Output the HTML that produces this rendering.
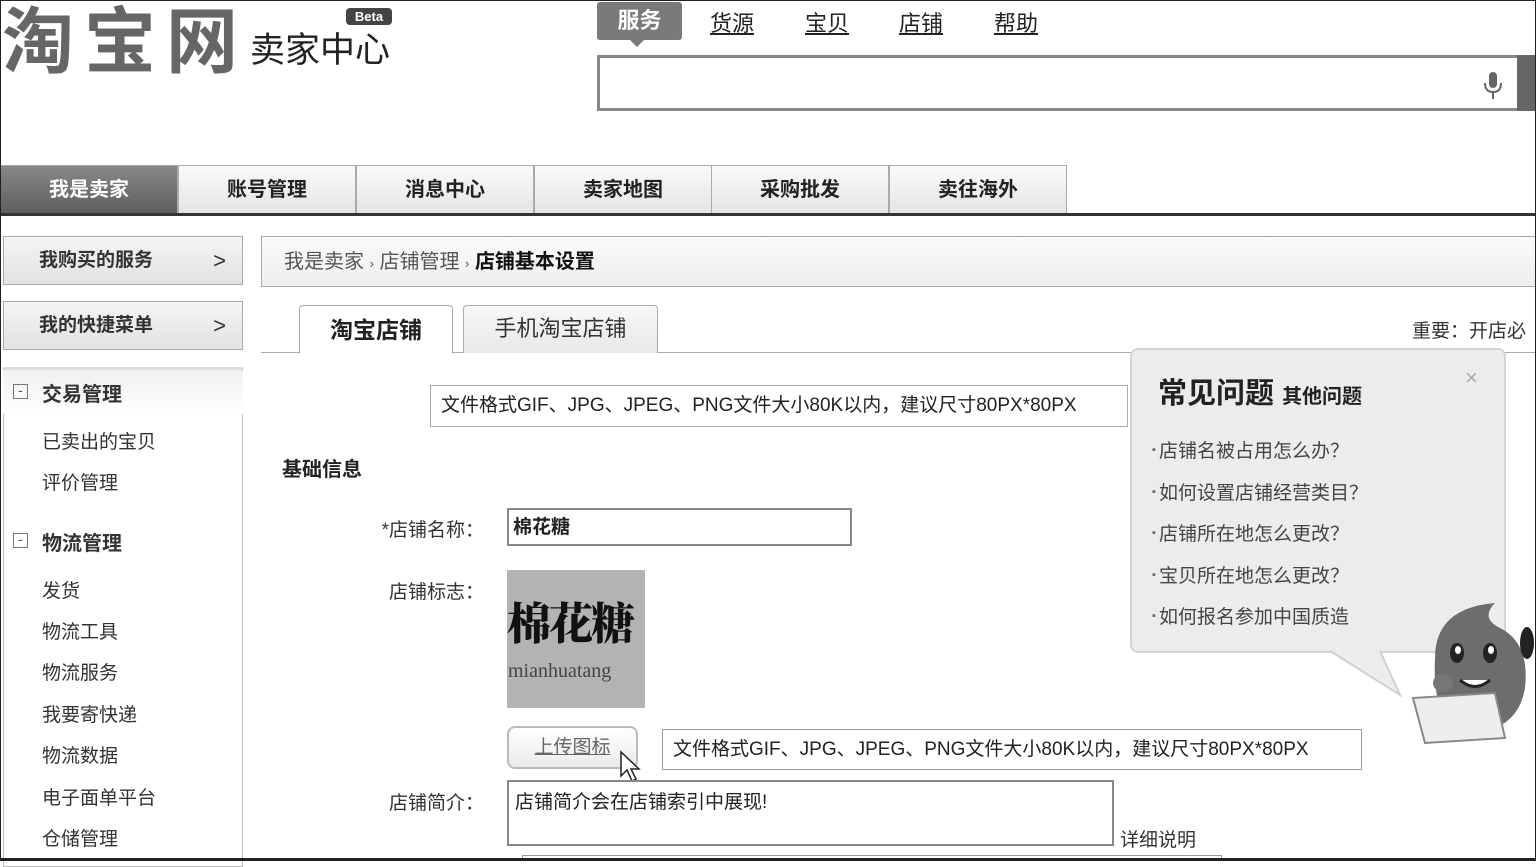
<!DOCTYPE html>
<html><head><meta charset="utf-8"><style>
*{margin:0;padding:0;box-sizing:border-box}
body{width:1536px;height:861px;overflow:hidden;background:#fff;font-family:"Liberation Sans","Noto Sans CJK SC",sans-serif;color:#222;position:relative}
.a{position:absolute}
.frame{left:0;top:0;width:1536px;height:861px;border:1px solid #222;border-bottom:3px solid #222;z-index:50;pointer-events:none}
.nt{top:165px;height:49px;width:178px;border:1px solid #aaa;border-bottom:none;background:linear-gradient(#fafafa,#e4e4e4);font-size:20px;font-weight:bold;text-align:center;line-height:48px;color:#222}
.sb{left:3px;width:240px;height:49px;border:1px solid #aaa;background:linear-gradient(#f4f4f4,#e2e2e2);font-size:19px;font-weight:bold;line-height:47px;padding-left:35px;color:#333}
.sb span{position:absolute;right:16px;font-weight:normal;font-size:22px}
.mi{left:42px;font-size:19px;color:#333}
.lbl{font-size:19px;color:#333;text-align:right;width:200px;left:284px}
.box{border:1px solid #999;background:#fff;font-size:19px;color:#222;white-space:nowrap;overflow:hidden}
.q{left:1152px;font-size:19px;color:#444}
.q:before{content:"▪ ";font-size:11px;vertical-align:4px;color:#666}
</style></head><body>
<div class="a frame"></div>
<div class="a" style="left:2px;top:-17px;font-size:72px;font-weight:bold;color:#666;letter-spacing:10px">淘宝网</div>
<div class="a" style="left:250px;top:22px;font-size:35px;color:#222">卖家中心</div>
<div class="a" style="left:346px;top:8px;width:46px;height:17px;background:#444;border-radius:4px;color:#fff;font-size:13px;font-weight:bold;text-align:center;line-height:17px">Beta</div>
<div class="a" style="left:597px;top:2px;width:85px;height:38px;background:#7a7a7a;border-radius:3px;color:#fff;font-size:22px;font-weight:bold;text-align:center;line-height:38px">服务</div>
<div class="a" style="left:630px;top:40px;width:0;height:0;border:7px solid transparent;border-top-color:#7a7a7a"></div>
<div class="a" style="left:710px;top:6px;font-size:22px;text-decoration:underline">货源</div>
<div class="a" style="left:805px;top:6px;font-size:22px;text-decoration:underline">宝贝</div>
<div class="a" style="left:899px;top:6px;font-size:22px;text-decoration:underline">店铺</div>
<div class="a" style="left:994px;top:6px;font-size:22px;text-decoration:underline">帮助</div>
<div class="a" style="left:597px;top:55px;width:922px;height:56px;border:3px solid #888;border-right:none;background:#fff"></div>
<div class="a" style="left:1517px;top:55px;width:19px;height:56px;background:#666"></div>
<svg class="a" style="left:1482px;top:70px" width="22" height="32"><rect x="7" y="2" width="8" height="16" rx="4" fill="#666"/><path d="M3 13 q0 9 8 9 q8 0 8-9 M11 22 v7" stroke="#666" stroke-width="2" fill="none"/></svg>
<div class="a nt" style="left:0;background:linear-gradient(#888,#5e5e5e);color:#fff">我是卖家</div>
<div class="a nt" style="left:178px">账号管理</div>
<div class="a nt" style="left:356px">消息中心</div>
<div class="a nt" style="left:534px">卖家地图</div>
<div class="a nt" style="left:711px">采购批发</div>
<div class="a nt" style="left:889px">卖往海外</div>
<div class="a" style="left:0;top:213px;width:1536px;height:3px;background:#333"></div>
<div class="a sb" style="top:236px">我购买的服务<span>&gt;</span></div>
<div class="a sb" style="top:301px">我的快捷菜单<span>&gt;</span></div>
<div class="a" style="left:3px;top:367px;width:240px;height:500px;border:1px solid #bbb;border-top:3px solid #ddd"></div>
<div class="a" style="left:3px;top:370px;width:240px;height:44px;background:linear-gradient(#f0f0f0,#fff)"></div>
<div class="a" style="left:13px;top:384px;width:15px;height:15px;border:1px solid #777;font-size:14px;line-height:11px;text-align:center;color:#555">-</div>
<div class="a" style="left:42px;top:378px;font-size:20px;font-weight:bold;color:#333">交易管理</div>
<div class="a mi" style="top:427px">已卖出的宝贝</div>
<div class="a mi" style="top:468px">评价管理</div>
<div class="a" style="left:13px;top:533px;width:15px;height:15px;border:1px solid #777;font-size:14px;line-height:11px;text-align:center;color:#555">-</div>
<div class="a" style="left:42px;top:527px;font-size:20px;font-weight:bold;color:#333">物流管理</div>
<div class="a mi" style="top:576px">发货</div>
<div class="a mi" style="top:617px">物流工具</div>
<div class="a mi" style="top:658px">物流服务</div>
<div class="a mi" style="top:700px">我要寄快递</div>
<div class="a mi" style="top:741px">物流数据</div>
<div class="a mi" style="top:783px">电子面单平台</div>
<div class="a mi" style="top:824px">仓储管理</div>
<div class="a" style="left:261px;top:236px;width:1280px;height:51px;border:1px solid #aaa;background:linear-gradient(#fafafa,#eee);font-size:20px;line-height:50px;padding-left:22px;color:#555">我是卖家 <span style="font-size:13px">›</span> 店铺管理 <span style="font-size:13px">›</span> <b style="color:#111">店铺基本设置</b></div>
<div class="a" style="left:261px;top:352px;width:1280px;height:1px;background:#aaa"></div>
<div class="a" style="left:299px;top:305px;width:154px;height:49px;border:1px solid #aaa;border-bottom:none;background:#fff;border-radius:4px 4px 0 0;font-size:23px;font-weight:bold;text-align:center;line-height:48px">淘宝店铺</div>
<div class="a" style="left:463px;top:305px;width:195px;height:48px;border:1px solid #aaa;border-bottom:none;background:linear-gradient(#f8f8f8,#e8e8e8);border-radius:4px 4px 0 0;font-size:22px;text-align:center;line-height:46px;color:#333">手机淘宝店铺</div>
<div class="a" style="left:1412px;top:316px;font-size:19px;color:#333;white-space:nowrap">重要：开店必</div>
<div class="a box" style="left:430px;top:385px;width:698px;height:42px;line-height:40px;padding-left:10px;border-color:#aaa">文件格式GIF、JPG、JPEG、PNG文件大小80K以内，建议尺寸80PX*80PX</div>
<div class="a" style="left:282px;top:453px;font-size:20px;font-weight:bold;color:#222">基础信息</div>
<div class="a lbl" style="top:515px">*店铺名称：</div>
<div class="a box" style="left:507px;top:508px;width:345px;height:38px;line-height:36px;padding-left:4px;font-weight:bold;border:2px solid #888">棉花糖</div>
<div class="a lbl" style="top:577px">店铺标志：</div>
<div class="a" style="left:507px;top:570px;width:138px;height:138px;background:#b3b3b3"></div>
<div class="a" style="left:507px;top:588px;font-size:44px;font-family:'Noto Serif CJK SC',serif;font-weight:900;color:#111;letter-spacing:-2px">棉花糖</div>
<div class="a" style="left:508px;top:660px;font-size:20px;font-family:'Liberation Serif',serif;color:#444">mianhuatang</div>
<div class="a" style="left:507px;top:726px;width:131px;height:43px;border:2px solid #bbb;border-radius:8px;background:linear-gradient(#fff,#eaeaea);font-size:19px;text-align:center;line-height:40px;color:#666;text-decoration:underline">上传图标</div>
<svg class="a" style="left:619px;top:750px" width="24" height="36"><path d="M2 2 L2 26 L8 20 L13 31 L17 29 L12 19 L20 19 Z" fill="#fff" stroke="#222" stroke-width="1.5"/></svg>
<div class="a box" style="left:662px;top:729px;width:700px;height:41px;line-height:40px;padding-left:10px;border-color:#999">文件格式GIF、JPG、JPEG、PNG文件大小80K以内，建议尺寸80PX*80PX</div>
<div class="a lbl" style="top:788px">店铺简介：</div>
<div class="a box" style="left:507px;top:780px;width:607px;height:66px;padding:5px 6px;border:2px solid #888">店铺简介会在店铺索引中展现!</div>
<div class="a" style="left:1120px;top:825px;font-size:19px;color:#333">详细说明</div>
<div class="a" style="left:522px;top:855px;width:700px;height:4px;border:1px solid #999"></div>
<div class="a" style="left:1130px;top:348px;width:376px;height:305px;background:#ececec;border:2px solid #d4d4d4;border-radius:8px"></div>
<svg class="a" style="left:1330px;top:650px" width="100" height="50"><path d="M0 1 L70 45 L50 1" fill="#ececec" stroke="#d0d0d0" stroke-width="2"/><path d="M3 0 L48 0" stroke="#ececec" stroke-width="4"/></svg>
<div class="a" style="left:1465px;top:365px;font-size:22px;color:#aaa">×</div>
<div class="a" style="left:1158px;top:370px;font-size:29px;font-weight:bold;color:#222">常见问题 <span style="font-size:20px">其他问题</span></div>
<div class="a q" style="top:436px">店铺名被占用怎么办？</div>
<div class="a q" style="top:478px">如何设置店铺经营类目？</div>
<div class="a q" style="top:519px">店铺所在地怎么更改？</div>
<div class="a q" style="top:561px">宝贝所在地怎么更改？</div>
<div class="a q" style="top:602px">如何报名参加中国质造</div>
<svg class="a" style="left:1405px;top:598px" width="131" height="150">
<path d="M30 60 Q30 10 90 5 Q75 20 95 30 Q125 45 120 90 Q115 120 90 130 L40 120 Q28 100 30 60Z" fill="#6d6d6d"/>
<ellipse cx="52" cy="55" rx="7" ry="10" fill="#222"/><ellipse cx="85" cy="55" rx="7" ry="10" fill="#222"/>
<ellipse cx="53" cy="52" rx="3" ry="4" fill="#fff"/><ellipse cx="86" cy="52" rx="3" ry="4" fill="#fff"/>
<path d="M55 82 Q70 95 85 82" stroke="#222" stroke-width="3" fill="#fff"/>
<ellipse cx="122" cy="45" rx="7" ry="16" fill="#222"/>
<path d="M8 100 L90 95 L100 140 L20 145 Z" fill="#eee" stroke="#888" stroke-width="2"/>
<ellipse cx="38" cy="85" rx="10" ry="9" fill="#777"/>
</svg>
</body></html>
